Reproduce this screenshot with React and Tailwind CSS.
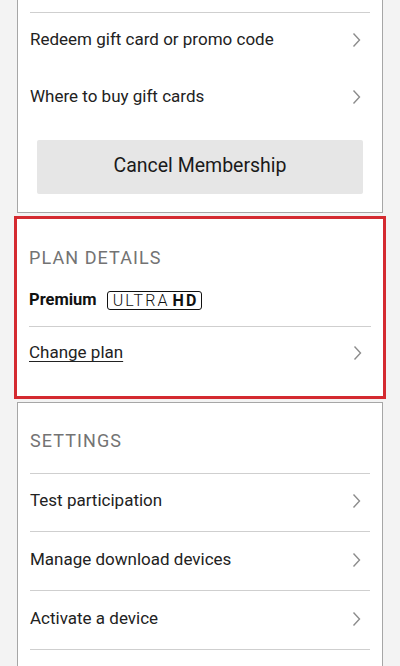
const font = { fontFamily: 'Roboto, "Liberation Sans", sans-serif' }

function Chevron() {
  return (
    <svg width="9" height="16" viewBox="0 0 9 16" className="shrink-0 mr-[9px]">
      <path d="M1.5 1.5 L7.5 8 L1.5 14.5" fill="none" stroke="#8c8c8c" strokeWidth="1.4" />
    </svg>
  )
}

function Row({ label, underline, height = 'h-[57px]', divider = true }) {
  return (
    <div className={`${height} pb-[3px] flex items-center justify-between ${divider ? 'border-b border-[#cfcfcf]' : ''}`}>
      <span className={`text-[17px] text-[#222] ${underline ? 'underline underline-offset-[3px] decoration-1' : ''}`}>
        {label}
      </span>
      <Chevron />
    </div>
  )
}

export default function App() {
  return (
    <div className="min-h-[666px] bg-[#f3f3f3] overflow-hidden" style={font}>
      {/* Membership card (top part cut off) */}
      <div className="mx-[17px] bg-white border-x border-b border-[#a6a6a6]">
        <div className="h-[12px]" />
        <div className="mx-3 border-t border-[#cfcfcf]">
          <Row label="Redeem gift card or promo code" height="h-[57px]" divider={false} />
          <Row label="Where to buy gift cards" height="h-[57px]" divider={false} />
        </div>
        <div className="px-[19px] pt-[13px] pb-[18px]">
          <button className="w-full h-[54px] pb-[2px] rounded-[2px] bg-[#e6e6e6] text-[19.5px] text-[#1a1a1a]">
            Cancel Membership
          </button>
        </div>
      </div>

      {/* Plan details, highlighted */}
      <div className="mx-[14px] mt-[3px] border-[3px] border-[#d42a30] bg-white">
        <div className="px-3 pt-[26px] pb-[14px]">
          <div className="h-[24px] flex items-center text-[18px] text-[#737373] tracking-[0.06em]">PLAN DETAILS</div>
          <div className="mt-[22px] h-[19px] flex items-center gap-[10px]">
            <span className="text-[16.5px] font-bold text-[#111]">Premium</span>
            <span className="h-[19px] pl-[5px] pr-[3px] flex items-center border-[1.5px] border-[#111] rounded-[3px] text-[16px] leading-none text-[#111] tracking-[0.13em]">
              <span className="font-light">ULTRA</span>
              <span className="font-bold ml-[3px]">HD</span>
            </span>
          </div>
          <div className="mt-[16px] border-t border-[#cfcfcf]">
            <Row label="Change plan" underline height="h-[55px]" divider={false} />
          </div>
        </div>
      </div>

      {/* Settings */}
      <div className="mx-[17px] mt-[3px] bg-white border-x border-t border-[#a6a6a6]">
        <div className="px-3 pt-[25px]">
          <div className="h-[24px] flex items-center text-[18px] text-[#737373] tracking-[0.06em]">SETTINGS</div>
          <div className="mt-[21px] border-t border-[#cfcfcf]">
            <Row label="Test participation" height="h-[58px]" />
            <Row label="Manage download devices" height="h-[59px]" />
            <Row label="Activate a device" height="h-[59px]" />
            <div className="h-[60px]" />
          </div>
        </div>
      </div>
    </div>
  )
}
